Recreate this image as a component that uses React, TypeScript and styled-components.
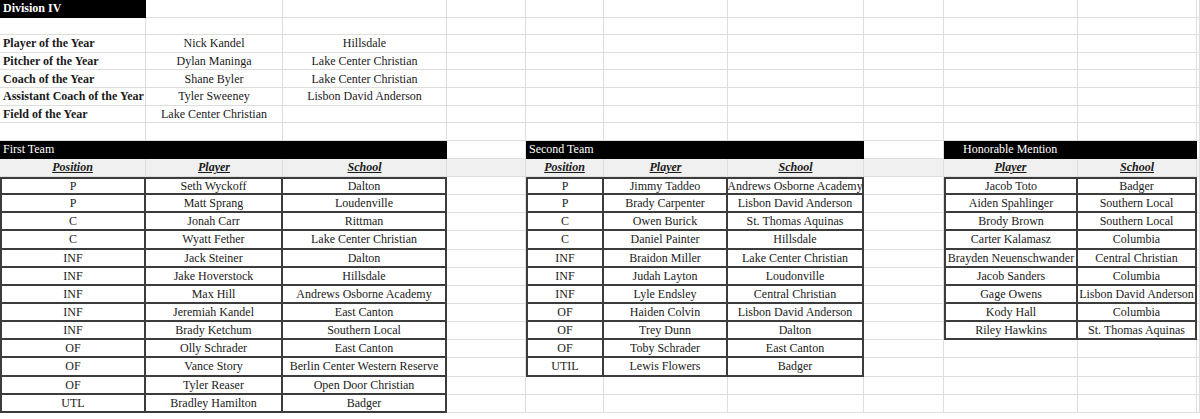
import styled, { createGlobalStyle } from "styled-components";

const GlobalStyle = createGlobalStyle`
  html, body {
    margin: 0;
    padding: 0;
    background: #ffffff;
  }
  body {
    font-family: "Liberation Serif", "Times New Roman", serif;
    font-size: 12px;
    color: #1a1a1a;
  }
`;

const COLS = [146, 137, 164, 79, 78, 124, 136, 80, 134, 119, 3];
const ROWS = [17.6, 17.6, 17.6, 17.6, 17.6, 17.6, 17.6, 17.8, 18, 18, ...Array(13).fill(18.15)];

const Sheet = styled.div`
  display: grid;
  grid-template-columns: ${COLS.map((c) => c + "px").join(" ")};
  grid-template-rows: ${ROWS.map((r) => r + "px").join(" ")};
  width: 1200px;
  height: 419px;
  overflow: hidden;
  background: #ffffff;
`;

type Kind = "plain" | "bar" | "head" | "data";

const Cell = styled.div<{
  $kind: Kind;
  $align?: "left" | "center";
  $bold?: boolean;
  $span?: number;
  $indent?: number;
  $leftEdge?: boolean;
  $topEdge?: boolean;
}>`
  box-sizing: border-box;
  display: flex;
  align-items: center;
  justify-content: ${(p) => (p.$align === "left" ? "flex-start" : "center")};
  padding-left: ${(p) => (p.$indent ? p.$indent + "px" : p.$align === "left" ? "3px" : "0")};
  padding-top: 1px;
  grid-column: span ${(p) => p.$span || 1};
  white-space: nowrap;
  overflow: visible;
  min-width: 0;
  font-weight: ${(p) => (p.$bold ? 700 : 400)};
  background: ${(p) => (p.$kind === "bar" ? "#000000" : p.$kind === "head" ? "#f0f0f0" : "#ffffff")};
  color: ${(p) => (p.$kind === "bar" ? "#ffffff" : "#1a1a1a")};
  border-right: ${(p) => (p.$kind === "data" ? "2px solid #3c3c3c" : p.$kind === "bar" ? "1px solid #000" : "1px solid #dedede")};
  border-bottom: ${(p) => (p.$kind === "data" ? "2px solid #3c3c3c" : p.$kind === "bar" ? "1px solid #000" : "1px solid #dedede")};
  border-left: ${(p) => (p.$leftEdge ? "2px solid #3c3c3c" : "none")};
  border-top: ${(p) => (p.$topEdge ? "2px solid #3c3c3c" : "none")};
`;

const HeadLabel = styled.span`
  font-weight: 700;
  font-style: italic;
  text-decoration: underline;
`;

type CellDef = {
  text?: string;
  kind?: Kind;
  align?: "left" | "center";
  bold?: boolean;
  span?: number;
  indent?: number;
  leftEdge?: boolean;
  topEdge?: boolean;
  head?: boolean;
};

const awards = [
  ["Player of the Year", "Nick Kandel", "Hillsdale"],
  ["Pitcher of the Year", "Dylan Maninga", "Lake Center Christian"],
  ["Coach of the Year", "Shane Byler", "Lake Center Christian"],
  ["Assistant Coach of the Year", "Tyler Sweeney", "Lisbon David Anderson"],
  ["Field of the Year", "Lake Center Christian", ""],
];

const firstTeam = [
  ["P", "Seth Wyckoff", "Dalton"],
  ["P", "Matt Sprang", "Loudenville"],
  ["C", "Jonah Carr", "Rittman"],
  ["C", "Wyatt Fether", "Lake Center Christian"],
  ["INF", "Jack Steiner", "Dalton"],
  ["INF", "Jake Hoverstock", "Hillsdale"],
  ["INF", "Max Hill", "Andrews Osborne Academy"],
  ["INF", "Jeremiah Kandel", "East Canton"],
  ["INF", "Brady Ketchum", "Southern Local"],
  ["OF", "Olly Schrader", "East Canton"],
  ["OF", "Vance Story", "Berlin Center Western Reserve"],
  ["OF", "Tyler Reaser", "Open Door Christian"],
  ["UTL", "Bradley Hamilton", "Badger"],
];

const secondTeam = [
  ["P", "Jimmy Taddeo", "Andrews Osborne Academy"],
  ["P", "Brady Carpenter", "Lisbon David Anderson"],
  ["C", "Owen Burick", "St. Thomas Aquinas"],
  ["C", "Daniel Painter", "Hillsdale"],
  ["INF", "Braidon Miller", "Lake Center Christian"],
  ["INF", "Judah Layton", "Loudonville"],
  ["INF", "Lyle Endsley", "Central Christian"],
  ["OF", "Haiden Colvin", "Lisbon David Anderson"],
  ["OF", "Trey Dunn", "Dalton"],
  ["OF", "Toby Schrader", "East Canton"],
  ["UTIL", "Lewis Flowers", "Badger"],
];

const honorable = [
  ["Jacob Toto", "Badger"],
  ["Aiden Spahlinger", "Southern Local"],
  ["Brody Brown", "Southern Local"],
  ["Carter Kalamasz", "Columbia"],
  ["Brayden Neuenschwander", "Central Christian"],
  ["Jacob Sanders", "Columbia"],
  ["Gage Owens", "Lisbon David Anderson"],
  ["Kody Hall", "Columbia"],
  ["Riley Hawkins", "St. Thomas Aquinas"],
];

const empty = (n: number): CellDef[] => Array.from({ length: n }, () => ({}));

function tableCells(values: string[] | undefined, width: number, rowIndex: number): CellDef[] {
  if (!values) return empty(width);
  return values.map((v, i) => ({
    text: v,
    kind: "data" as Kind,
    leftEdge: i === 0,
    topEdge: rowIndex === 0,
  }));
}

function buildRows(): CellDef[][] {
  const rows: CellDef[][] = [];
  rows.push([{ text: "Division IV", kind: "bar", align: "left", bold: true }, ...empty(10)]);
  rows.push(empty(11));
  awards.forEach(([label, name, school]) => {
    rows.push([
      { text: label, align: "left", bold: true },
      { text: name },
      { text: school },
      ...empty(8),
    ]);
  });
  rows.push(empty(11));
  rows.push([
    { text: "First Team", kind: "bar", align: "left", span: 3 },
    {},
    { text: "Second Team", kind: "bar", align: "left", span: 3 },
    {},
    { text: "Honorable Mention", kind: "bar", align: "left", indent: 19, span: 2 },
    {},
  ]);
  const heads = ["Position", "Player", "School", "", "Position", "Player", "School", "", "Player", "School", ""];
  rows.push(heads.map((h) => ({ text: h, kind: "head" as Kind, head: h !== "" })));
  for (let r = 0; r < 13; r++) {
    rows.push([
      ...tableCells(firstTeam[r], 3, r),
      {},
      ...tableCells(secondTeam[r], 3, r),
      {},
      ...tableCells(honorable[r], 2, r),
      {},
    ]);
  }
  return rows;
}

export default function App() {
  const rows = buildRows();
  return (
    <>
      <GlobalStyle />
      <Sheet>
        {rows.flatMap((row, ri) =>
          row.map((c, ci) => (
            <Cell
              key={`${ri}-${ci}`}
              $kind={c.kind || "plain"}
              $align={c.align}
              $bold={c.bold}
              $span={c.span}
              $indent={c.indent}
              $leftEdge={c.leftEdge}
              $topEdge={c.topEdge}
            >
              {c.head ? <HeadLabel>{c.text}</HeadLabel> : c.text}
            </Cell>
          ))
        )}
      </Sheet>
    </>
  );
}
